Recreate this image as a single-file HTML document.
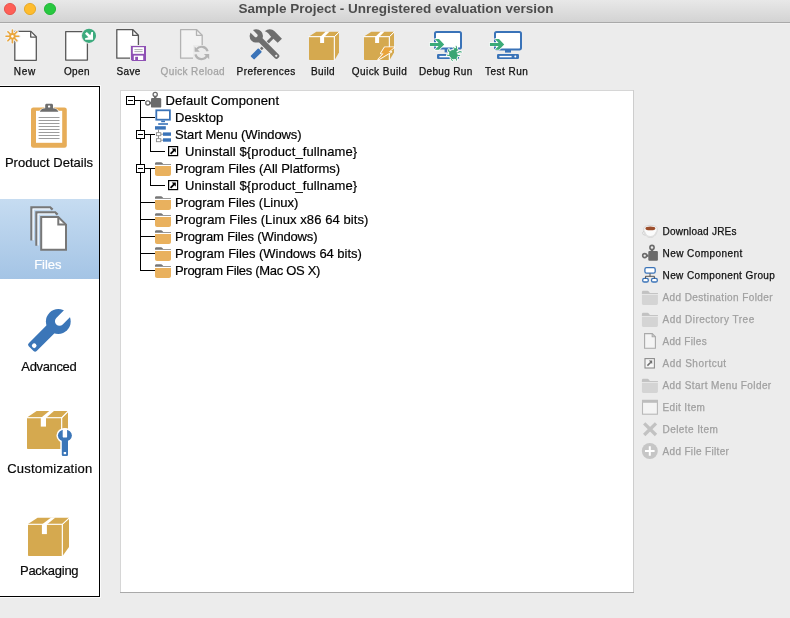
<!DOCTYPE html>
<html><head><meta charset="utf-8"><style>
html,body{margin:0;padding:0;width:790px;height:618px;overflow:hidden;background:#ececec;}
svg{position:absolute;left:0;top:0;display:block;will-change:transform;}
text{font-family:"Liberation Sans",sans-serif;}
</style></head><body>
<svg width="790" height="618" viewBox="0 0 790 618">
<defs>
<linearGradient id="tb" x1="0" y1="0" x2="0" y2="1">
<stop offset="0" stop-color="#e8e8e8"/><stop offset="1" stop-color="#d3d3d3"/>
</linearGradient>
<linearGradient id="sel" x1="0" y1="0" x2="0" y2="1">
<stop offset="0" stop-color="#c6dcf1"/><stop offset="1" stop-color="#a4c4e5"/>
</linearGradient>
</defs>
<!-- title bar -->
<rect x="0" y="0" width="790" height="22" fill="url(#tb)"/>
<rect x="0" y="22" width="790" height="1" fill="#a9a9a9"/>
<rect x="0" y="23" width="790" height="1" fill="#f1f1f1"/>
<circle cx="10" cy="9" r="5.6" fill="#fe5f57" stroke="#e2463f" stroke-width="0.8"/>
<circle cx="30" cy="9" r="5.6" fill="#febc2e" stroke="#e1a116" stroke-width="0.8"/>
<circle cx="50" cy="9" r="5.6" fill="#28c840" stroke="#14ae2a" stroke-width="0.8"/>
<text x="238.5" y="13" font-size="13.5" font-weight="bold" fill="#4d4d4d">Sample Project - Unregistered evaluation version</text>

<!-- toolbar labels -->
<g font-size="10" fill="#111" stroke="#111" stroke-width="0.25" text-anchor="middle">
<text textLength="21.6" lengthAdjust="spacing" x="24.5" y="75">New</text>
<text textLength="25.6" lengthAdjust="spacing" x="76.7" y="75">Open</text>
<text textLength="23.7" lengthAdjust="spacing" x="128.4" y="75">Save</text>
<text textLength="64.1" lengthAdjust="spacing" x="192.6" y="75" fill="#a3a3a3" stroke="#a3a3a3">Quick Reload</text>
<text textLength="58.7" lengthAdjust="spacing" x="265.9" y="75">Preferences</text>
<text textLength="23.5" lengthAdjust="spacing" x="322.8" y="75">Build</text>
<text textLength="55.1" lengthAdjust="spacing" x="379.3" y="75">Quick Build</text>
<text textLength="53.2" lengthAdjust="spacing" x="445.6" y="75">Debug Run</text>
<text textLength="43.0" lengthAdjust="spacing" x="506.4" y="75">Test Run</text>
</g>

<!-- sidebar -->
<rect x="0" y="85" width="101" height="513" fill="#fbfbfb"/>
<rect x="0" y="86" width="99" height="510" fill="#ffffff"/>
<rect x="0" y="86" width="100" height="1" fill="#000"/>
<rect x="99" y="86" width="1" height="511" fill="#000"/>
<rect x="0" y="596" width="100" height="1" fill="#000"/>
<rect x="0" y="199" width="99" height="80" fill="url(#sel)"/>
<g font-size="13" fill="#0a0a0a" stroke="#0a0a0a" stroke-width="0.2" text-anchor="middle">
<text x="49" y="167">Product Details</text>
<text textLength="27.2" lengthAdjust="spacing" x="47.8" y="269" fill="#ffffff" stroke="#ffffff">Files</text>
<text textLength="55.3" lengthAdjust="spacing" x="49" y="371">Advanced</text>
<text textLength="85" lengthAdjust="spacing" x="49.7" y="473">Customization</text>
<text textLength="58.6" lengthAdjust="spacing" x="49.3" y="575">Packaging</text>
</g>

<!-- tree panel -->
<rect x="120" y="90" width="514" height="503" fill="#d6d6d6"/>
<rect x="633" y="90" width="1" height="503" fill="#cdcdcd"/>
<rect x="120" y="592" width="514" height="1" fill="#a9a9a9"/>
<rect x="121" y="91" width="512" height="501" fill="#ffffff"/>

<g font-size="13" fill="#000" stroke="#000" stroke-width="0.2">
<text textLength="113.5" lengthAdjust="spacing" x="165.5" y="105">Default Component</text>
<text textLength="48.2" lengthAdjust="spacing" x="175" y="122">Desktop</text>
<text textLength="126.6" lengthAdjust="spacing" x="175" y="139">Start Menu (Windows)</text>
<text textLength="172.1" lengthAdjust="spacing" x="185" y="156">Uninstall ${product_fullname}</text>
<text textLength="165.1" lengthAdjust="spacing" x="175" y="173">Program Files (All Platforms)</text>
<text textLength="172.1" lengthAdjust="spacing" x="185" y="190">Uninstall ${product_fullname}</text>
<text textLength="123.3" lengthAdjust="spacing" x="175" y="207">Program Files (Linux)</text>
<text textLength="193.4" lengthAdjust="spacing" x="175" y="224">Program Files (Linux x86 64 bits)</text>
<text textLength="142.5" lengthAdjust="spacing" x="175" y="241">Program Files (Windows)</text>
<text textLength="186.8" lengthAdjust="spacing" x="175" y="258">Program Files (Windows 64 bits)</text>
<text textLength="145.4" lengthAdjust="spacing" x="175" y="275">Program Files (Mac OS X)</text>
</g>

<!-- actions -->
<g font-size="10" fill="#111" stroke="#111" stroke-width="0.25">
<text textLength="74.0" lengthAdjust="spacing" x="662.5" y="235">Download JREs</text>
<text textLength="79.7" lengthAdjust="spacing" x="662.5" y="257">New Component</text>
<text textLength="112.4" lengthAdjust="spacing" x="662.5" y="279">New Component Group</text>
<g fill="#a0a0a0" stroke="#a0a0a0">
<text textLength="110.0" lengthAdjust="spacing" x="662.5" y="301">Add Destination Folder</text>
<text textLength="91.7" lengthAdjust="spacing" x="662.5" y="323">Add Directory Tree</text>
<text textLength="44.2" lengthAdjust="spacing" x="662.5" y="345">Add Files</text>
<text textLength="63.6" lengthAdjust="spacing" x="662.5" y="367">Add Shortcut</text>
<text textLength="108.7" lengthAdjust="spacing" x="662.5" y="389">Add Start Menu Folder</text>
<text textLength="42.4" lengthAdjust="spacing" x="662.5" y="411">Edit Item</text>
<text textLength="55.4" lengthAdjust="spacing" x="662.5" y="433">Delete Item</text>
<text textLength="66.4" lengthAdjust="spacing" x="662.5" y="455">Add File Filter</text>
</g>
</g>
<!-- New -->
<g>
<path d="M14.8,31.4 H30.9 L36.3,36.8 V60.3 H14.8 Z" fill="#fff" stroke="#585858" stroke-width="1.3" stroke-linejoin="round"/>
<path d="M30.7,31.4 V37.1 H36.3" fill="none" stroke="#585858" stroke-width="1.3" stroke-linejoin="round"/>
<g stroke="#f2f2f2" stroke-width="3.6" stroke-linecap="round">
<line x1="12.4" y1="30" x2="12.4" y2="42.8"/>
<line x1="6" y1="36.3" x2="18.8" y2="36.3"/>
<line x1="7.9" y1="31.8" x2="16.9" y2="40.8"/>
<line x1="16.9" y1="31.8" x2="7.9" y2="40.8"/>
</g>
<g stroke="#eaa63c" stroke-width="1.6" stroke-linecap="round">
<line x1="12.4" y1="30" x2="12.4" y2="42.8"/>
<line x1="6" y1="36.3" x2="18.8" y2="36.3"/>
<line x1="7.9" y1="31.8" x2="16.9" y2="40.8"/>
<line x1="16.9" y1="31.8" x2="7.9" y2="40.8"/>
</g>
<circle cx="12.4" cy="36.3" r="2.3" fill="#fff" stroke="#eaa63c" stroke-width="1.9"/>
</g>
<!-- Open -->
<g>
<path d="M65.7,31.6 H82 L87.4,37 V60.1 H65.7 Z" fill="#fff" stroke="#585858" stroke-width="1.3" stroke-linejoin="round"/>
<circle cx="89" cy="35.85" r="8" fill="#ececec"/>
<circle cx="89" cy="35.85" r="7.05" fill="#3dab7e"/>
<path d="M86.82,31.88 L90.27,35.33 L91.35,32.1 L93,32.1 L93,39.8 L85.1,39.8 L85.1,38.35 L88.43,37.17 L84.98,33.72 Z" fill="#fff"/>
</g>
<!-- Save -->
<g>
<path d="M116.8,29.7 H132.9 L138.4,35.2 V58.2 H116.8 Z" fill="#fff" stroke="#585858" stroke-width="1.3" stroke-linejoin="round"/>
<path d="M132.7,29.7 V35.4 H138.4" fill="none" stroke="#585858" stroke-width="1.3" stroke-linejoin="round"/>
<path d="M130,45 H147 V62 H131.5 L130,60.5 Z" fill="#ececec"/>
<path d="M131,46 H146 V61 H132.2 L131,59.8 Z" fill="#8e50b4"/>
<rect x="132.8" y="47.2" width="11.2" height="6.6" fill="#fff"/>
<line x1="134.4" y1="49.6" x2="142.6" y2="49.6" stroke="#9a9a9a" stroke-width="0.8"/>
<line x1="134.4" y1="51.6" x2="142.6" y2="51.6" stroke="#9a9a9a" stroke-width="0.8"/>
<rect x="133.8" y="55.6" width="9.4" height="4.4" fill="#fff"/>
<rect x="135.2" y="56.8" width="2.8" height="3.2" fill="#8e50b4"/>
</g>
<!-- Quick Reload -->
<g>
<path d="M180.6,29.7 H196.7 L202.2,35.2 V58.2 H180.6 Z" fill="#f3f3f3" stroke="#b3b3b3" stroke-width="1.3" stroke-linejoin="round"/>
<path d="M196.5,29.7 V35.4 H202.2" fill="none" stroke="#b3b3b3" stroke-width="1.3" stroke-linejoin="round"/>
<rect x="193" y="45" width="18" height="16" fill="#ececec"/>
<g fill="none" stroke="#b3b3b3" stroke-width="2.2">
<path d="M196.6,49.2 A6.3,6.3 0 0 1 207.6,51.2"/>
<path d="M207.4,54.9 A6.3,6.3 0 0 1 195.4,54.4"/>
</g>
<path d="M194.6,46.6 V51.8 H199.8 Z" fill="#b3b3b3"/>
<path d="M209.2,59.2 V53.9 H203.9 Z" fill="#b3b3b3"/>
</g>
<!-- Preferences -->
<g>
<g transform="translate(256.2,53.9) rotate(-45)" fill="#6e6e6e">
<rect x="-5.6" y="-2.6" width="11.2" height="5.2" rx="0.9" fill="#3a73b8"/>
<rect x="6.6" y="-1.3" width="2.6" height="2.6"/>
<rect x="10" y="-1.5" width="13.5" height="3"/>
<path d="M23,7.4 L29,7.4 L29,-3 C29,-6.6 26.4,-9.8 22,-9.9 C22.9,-8.2 23.2,-5.6 22.7,-3 Z"/>
</g>
<g transform="translate(256.3,35.9) rotate(45)">
<path d="M0,-6.7 A6.7,6.7 0 1 1 0,6.7 A6.7,6.7 0 1 1 0,-6.7 Z M3,-2.7 L29,-2.7 C30.4,-2.7 31.2,-1.9 31.2,-0.5 L31.2,0.5 C31.2,1.9 30.4,2.7 29,2.7 L3,2.7 Z" fill="#6e6e6e" stroke="#ececec" stroke-width="1.6" paint-order="stroke" stroke-linejoin="round"/>
<path d="M-8,-1.8 L-0.6,-1.8 C0.4,-1.8 1.1,-1.1 1.1,-0.1 L1.1,0.1 C1.1,1.1 0.4,1.8 -0.6,1.8 L-8,1.8 Z" fill="#ececec"/>
<rect x="27.2" y="-1" width="2" height="2" fill="#ececec"/>
</g>
</g>
<!-- Build -->
<g>
<path d="M309,37 H334 V60 H309.8 Q309,60 309,59.2 Z" fill="#d5a94f"/>
<path d="M309,36.5 L316.3,31.8 H339 L334.5,36.5 Z" fill="#d5a94f"/>
<path d="M334.6,37 L339,32.6 V52.6 L334.6,60 Z" fill="#d5a94f"/>
<path d="M320.1,36.5 H324.1 V43 H320.1 Z" fill="#fff"/>
<path d="M320.1,37 L325.8,31.6 H329.6 L324.1,37 Z" fill="#fff"/>
<path d="M308.6,36.7 H334.3 L339.4,31.8" fill="none" stroke="#fff" stroke-width="1.0"/>
<line x1="334.3" y1="36.7" x2="334.3" y2="60.5" stroke="#fff" stroke-width="1.0"/>
</g>
<!-- Quick Build -->
<g>
<path d="M364,37 H389 V60 H364.8 Q364,60 364,59.2 Z" fill="#d5a94f"/>
<path d="M364,36.5 L371.3,31.8 H394 L389.5,36.5 Z" fill="#d5a94f"/>
<path d="M389.6,37 L394,32.6 V52.6 L389.6,60 Z" fill="#d5a94f"/>
<path d="M375.1,36.5 H379.1 V43 H375.1 Z" fill="#fff"/>
<path d="M375.1,37 L380.8,31.6 H384.6 L379.1,37 Z" fill="#fff"/>
<path d="M363.6,36.7 H389.3 L394.4,31.8" fill="none" stroke="#fff" stroke-width="1.0"/>
<line x1="389.3" y1="36.7" x2="389.3" y2="60.5" stroke="#fff" stroke-width="1.0"/>
<path d="M384.7,47.2 L394.2,47.2 L388.6,52 L391.4,51.8 L378.1,59.8 L383.6,53.4 L380.8,53.4 Z" fill="#e9a43b" stroke="#fff" stroke-width="1.6" stroke-linejoin="round" paint-order="stroke"/>
</g>
<!-- Debug Run -->
<g>
<rect x="435" y="32" width="26" height="16.6" rx="1.6" fill="#fff" stroke="#3a73b8" stroke-width="2"/>
<rect x="444.6" y="49" width="3.6" height="3.4" fill="#3a73b8"/>
<rect x="437" y="54" width="22" height="5" rx="1.2" fill="#3a73b8"/>
<rect x="439.4" y="55.9" width="12.2" height="1.4" fill="#fff"/>
<path d="M429.9,42.9 L438.6,42.9 L434.9,39 L439,39 L444.2,44.4 L439,49.8 L434.9,49.8 L438.6,45.9 L429.9,45.9 Z" fill="#3cab78" stroke="#fff" stroke-width="1.4" stroke-linejoin="round" paint-order="stroke"/>
<defs><g id="bug">
<ellipse cx="453.4" cy="54.6" rx="3.5" ry="4.3" transform="rotate(-30 453.4 54.6)"/>
<circle cx="455.6" cy="50" r="1.5"/>
<path d="M450.2,52.4 L448.4,51.2 L448.8,49.6 M457.6,52.6 L459.8,51.6 L461.4,52 M449.8,55.6 L447.2,55.2 M457.4,55.6 L459.8,55.6 M451,58.4 L452.4,60.8 M455.4,58.2 L456.4,58.6 L456.4,60.2 M454.4,49.2 L453.8,47.6 M456.8,49.2 L456.2,46.2"/>
</g></defs>
<use href="#bug" fill="#fff" stroke="#fff" stroke-width="2.6" stroke-linecap="round" stroke-linejoin="round"/>
<use href="#bug" fill="#3aa574" stroke="#3aa574" stroke-width="1" stroke-linecap="round" stroke-linejoin="round"/>
</g>
<!-- Test Run -->
<g>
<rect x="495" y="32" width="26" height="17.4" rx="1.6" fill="#fff" stroke="#3a73b8" stroke-width="2"/>
<rect x="505" y="50" width="6" height="2.6" fill="#3a73b8"/>
<rect x="497" y="54" width="22" height="5" rx="1.2" fill="#3a73b8"/>
<rect x="499.4" y="55.9" width="12.2" height="1.4" fill="#fff"/>
<circle cx="515.3" cy="56.6" r="1" fill="#fff"/>
<path d="M489.9,42.9 L498.6,42.9 L494.9,39 L499,39 L504.2,44.4 L499,49.8 L494.9,49.8 L498.6,45.9 L489.9,45.9 Z" fill="#3cab78" stroke="#fff" stroke-width="1.4" stroke-linejoin="round" paint-order="stroke"/>
</g>

<!-- Product Details clipboard -->
<g>
<rect x="31" y="107.4" width="35.8" height="40.4" rx="2.4" fill="#e7ad58"/>
<rect x="36" y="110.8" width="26.2" height="32" fill="#fff"/>
<g stroke="#929292" stroke-width="0.9">
<line x1="38.6" y1="117.5" x2="59.5" y2="117.5"/>
<line x1="38.6" y1="120.5" x2="59.5" y2="120.5"/>
<line x1="38.6" y1="123.5" x2="59.5" y2="123.5"/>
<line x1="38.6" y1="126.5" x2="59.5" y2="126.5"/>
<line x1="38.6" y1="129.5" x2="59.5" y2="129.5"/>
<line x1="38.6" y1="132.5" x2="59.5" y2="132.5"/>
<line x1="38.6" y1="135.5" x2="59.5" y2="135.5"/>
<line x1="38.6" y1="138.5" x2="59.5" y2="138.5"/>
</g>
<path d="M39.8,111.8 C40.4,109.9 42.4,108.5 45.2,108.3 V105.2 C45.2,104.4 45.9,103.8 46.7,103.8 H51.5 C52.3,103.8 53,104.4 53,105.2 V108.3 C55.8,108.5 57.8,109.9 58.4,111.8 Z" fill="#6e6e6e" stroke="#fff" stroke-width="1.3" paint-order="stroke"/>
<rect x="48" y="105.5" width="2.2" height="2.1" rx="0.6" fill="#fff"/>
</g>
<!-- Files -->
<g fill="none" stroke-linejoin="miter">
<path d="M31.4,240.6 V207.3 H50.2 L52.6,209.6" stroke="#777" stroke-width="2.2"/>
<path d="M33.1,240.2 V209 H50" stroke="#fff" stroke-width="1.1"/>
<path d="M36.4,245.8 V212.3 H55.2 L57.6,214.6" stroke="#777" stroke-width="2.2"/>
<path d="M38.1,245.4 V214 H55" stroke="#fff" stroke-width="1.1"/>
<path d="M41.2,249.7 V217.1 H58.3 L66,224.6 V249.7 Z" fill="#fff" stroke="#777" stroke-width="2"/>
<path d="M58.3,217.1 V224.4 H66" stroke="#777" stroke-width="2"/>
</g>
<!-- Advanced wrench -->
<g transform="translate(58.3,321.5) rotate(-45)">
<circle cx="0" cy="0" r="12.4" fill="#3b76b8"/>
<path d="M-6,-5.6 H-36.2 Q-38.4,-5.6 -38.4,-3.4 V3.4 Q-38.4,5.6 -36.2,5.6 H-6 Z" fill="#3b76b8"/>
<path d="M1.05,-3.9 H14 V5.2 H1.05 A4.55,4.55 0 0 1 1.05,-3.9 Z" fill="#fff"/>
<circle cx="-34.15" cy="0.07" r="2.3" fill="#fff"/>
</g>
<!-- Customization -->
<g>
<path d="M27,418 H61.4 V449 H27.8 Q27,449 27,448.2 Z" fill="#d5a94f"/>
<path d="M27,417.5 L36.6,411 H68 L61.9,417.5 Z" fill="#d5a94f"/>
<path d="M62.0,418 L68,411.8 V442 L62.0,449 Z" fill="#d5a94f"/>
<path d="M40.8,417.5 H46 V426.6 H40.8 Z" fill="#fff"/>
<path d="M40.8,418 L49.6,410.8 H54.2 L46,418 Z" fill="#fff"/>
<path d="M26.6,417.7 H61.699999999999996 L68.4,411" fill="none" stroke="#fff" stroke-width="1.1"/>
<line x1="61.699999999999996" y1="417.7" x2="61.699999999999996" y2="449.5" stroke="#fff" stroke-width="1.1"/>
<g fill="#3b76b8" stroke="#fff" stroke-width="3" stroke-linejoin="round">
<ellipse cx="64.9" cy="435.5" rx="7" ry="6"/>
<rect x="61.8" y="438" width="6.2" height="18" rx="1.3"/>
</g>
<ellipse cx="64.9" cy="435.5" rx="7" ry="6" fill="#3b76b8"/>
<rect x="61.8" y="438" width="6.2" height="18" rx="1.3" fill="#3b76b8"/>
<path d="M62.7,428.6 H67.1 V436.4 Q67.1,437.6 65.9,437.6 H63.9 Q62.7,437.6 62.7,436.4 Z" fill="#fff"/>
<rect x="63.7" y="452" width="2.4" height="2.2" fill="#fff"/>
</g>
<!-- Packaging -->
<g>
<path d="M28,524.6 H62 V556 H28.8 Q28,556 28,555.2 Z" fill="#d5a94f"/>
<path d="M28,524.1 L37.6,517.8 H69 L62.5,524.1 Z" fill="#d5a94f"/>
<path d="M62.6,524.6 L69,518.5999999999999 V547 L62.6,556 Z" fill="#d5a94f"/>
<path d="M41.9,524.1 H46.9 V534.1 H41.9 Z" fill="#fff"/>
<path d="M41.9,524.6 L51.2,517.5999999999999 H55.4 L46.9,524.6 Z" fill="#fff"/>
<path d="M27.6,524.3000000000001 H62.3 L69.4,517.8" fill="none" stroke="#fff" stroke-width="1.1"/>
<line x1="62.3" y1="524.3000000000001" x2="62.3" y2="556.5" stroke="#fff" stroke-width="1.1"/>
</g>
<g stroke="#000" stroke-width="1" fill="none" shape-rendering="crispEdges">
<rect x="126.5" y="96.5" width="8" height="8" fill="#fff"/>
<line x1="128" y1="100.5" x2="133" y2="100.5"/>
<line x1="135" y1="100.5" x2="145" y2="100.5"/>
<line x1="140.5" y1="100.5" x2="140.5" y2="130"/>
<line x1="140.5" y1="139" x2="140.5" y2="164"/>
<line x1="140.5" y1="173" x2="140.5" y2="271"/>
<line x1="140" y1="117.5" x2="155" y2="117.5"/>
<rect x="136.5" y="130.5" width="8" height="8" fill="#fff"/>
<line x1="138" y1="134.5" x2="143" y2="134.5"/>
<line x1="145" y1="134.5" x2="155" y2="134.5"/>
<line x1="150.5" y1="134.5" x2="150.5" y2="152"/>
<line x1="150" y1="151.5" x2="165" y2="151.5"/>
<rect x="136.5" y="164.5" width="8" height="8" fill="#fff"/>
<line x1="138" y1="168.5" x2="143" y2="168.5"/>
<line x1="145" y1="168.5" x2="155" y2="168.5"/>
<line x1="150.5" y1="168.5" x2="150.5" y2="186"/>
<line x1="150" y1="185.5" x2="165" y2="185.5"/>
<line x1="140" y1="202.5" x2="155" y2="202.5"/>
<line x1="140" y1="219.5" x2="155" y2="219.5"/>
<line x1="140" y1="236.5" x2="155" y2="236.5"/>
<line x1="140" y1="253.5" x2="155" y2="253.5"/>
<line x1="140" y1="270.5" x2="155" y2="270.5"/>
</g>
<!-- component icon -->
<g fill="#6b6b6b">
<rect x="151" y="98" width="10.2" height="9.6" rx="1.2"/>
<rect x="154" y="96" width="2.4" height="3"/>
<rect x="149" y="101.8" width="3" height="2.4"/>
<circle cx="155.2" cy="94.4" r="2.1" fill="#fff" stroke="#6b6b6b" stroke-width="1.3"/>
<circle cx="147.8" cy="102.9" r="2.1" fill="#fff" stroke="#6b6b6b" stroke-width="1.3"/>
</g>
<!-- desktop monitor -->
<g>
<rect x="156.3" y="110.3" width="13.6" height="9.4" fill="#fff" stroke="#3a73b8" stroke-width="1.8"/>
<rect x="161.2" y="120.6" width="3.8" height="1.6" fill="#3a73b8"/>
<rect x="158.2" y="123.2" width="9.8" height="1.6" fill="#3a73b8"/>
</g>
<!-- start menu icon -->
<g>
<rect x="155" y="126.2" width="10.8" height="3.4" fill="#3a73b8"/>
<line x1="158.5" y1="129.6" x2="158.5" y2="138.6" stroke="#8a8a8a" stroke-width="0.9"/>
<rect x="156.4" y="132.7" width="4.4" height="3" fill="#fff" stroke="#8a8a8a" stroke-width="0.9"/>
<rect x="156.4" y="138.7" width="4.4" height="3" fill="#fff" stroke="#8a8a8a" stroke-width="0.9"/>
<line x1="160.8" y1="134.2" x2="163" y2="134.2" stroke="#8a8a8a" stroke-width="0.9"/>
<line x1="160.8" y1="140.2" x2="163" y2="140.2" stroke="#8a8a8a" stroke-width="0.9"/>
<rect x="163" y="132.4" width="8" height="3.4" fill="#3a73b8"/>
<rect x="163" y="138.3" width="8" height="3.4" fill="#3a73b8"/>
</g>
<!-- shortcut icons -->
<g id="sc1">
<rect x="168.6" y="146.6" width="9" height="9" fill="#fff" stroke="#000" stroke-width="1.2"/>
<path d="M170.6,153.8 L174.2,150.2" stroke="#000" stroke-width="1.8"/>
<path d="M171.6,148.4 H175.8 V152.6 Z" fill="#000"/>
</g>
<g transform="translate(0,34)">
<rect x="168.6" y="146.6" width="9" height="9" fill="#fff" stroke="#000" stroke-width="1.2"/>
<path d="M170.6,153.8 L174.2,150.2" stroke="#000" stroke-width="1.8"/>
<path d="M171.6,148.4 H175.8 V152.6 Z" fill="#000"/>
</g>
<!-- folders -->
<g id="fold">
<path d="M155,164.6 V163.6 C155,162.8 155.6,162.2 156.4,162.2 H161 C161.6,162.2 162,162.6 162.4,163 L163.2,164 H171 V164.8 H155 Z" fill="#777"/>
<path d="M155,166 H171 V174 C171,175.1 170.1,176 169,176 H157 C155.9,176 155,175.1 155,174 Z" fill="#e9b15e"/>
</g>
<use href="#fold" y="34"/>
<use href="#fold" y="51"/>
<use href="#fold" y="68"/>
<use href="#fold" y="85"/>
<use href="#fold" y="102"/>
<!-- cup -->
<g>
<path d="M645.6,231.6 C643.2,231 642.2,232.2 642.6,233.6 C643,235 644.8,235.4 646.6,234.8" fill="none" stroke="#d0d0d0" stroke-width="1"/>
<path d="M643.8,228.6 C643.8,226.6 646.6,225.4 650.4,225.4 C654.2,225.4 657.2,226.6 657.2,228.6 C657.2,234 654.6,237.4 650.4,237.4 C646.4,237.4 643.8,234 643.8,228.6 Z" fill="#fbfbfb" stroke="#cfcfcf" stroke-width="0.9"/>
<ellipse cx="650.4" cy="228.4" rx="5" ry="1.9" fill="#9b4d2b"/>
<path d="M644.8,232 C645.6,235 647.6,236.6 650.4,236.6 C653.2,236.6 655.2,235 656.2,232" fill="none" stroke="#e0e0e0" stroke-width="1.1"/>
</g>
<!-- component -->
<g>
<rect x="648.3" y="251" width="9.6" height="9.8" rx="1.1" fill="#6b6b6b"/>
<rect x="650.8" y="249.6" width="2.4" height="2" fill="#6b6b6b"/>
<rect x="646.6" y="254.6" width="2" height="2.2" fill="#6b6b6b"/>
<circle cx="652" cy="247.5" r="2.1" fill="#ececec" stroke="#6b6b6b" stroke-width="1.6"/>
<circle cx="644.7" cy="255.6" r="2" fill="#ececec" stroke="#6b6b6b" stroke-width="1.6"/>
</g>
<!-- group -->
<g fill="#fff" stroke="#3a73b8" stroke-width="1.3">
<rect x="644.9" y="267.6" width="10.3" height="5.6" rx="1.6"/>
<rect x="642.7" y="278.4" width="5.6" height="3.6" rx="1.6"/>
<rect x="651.5" y="278.4" width="5.8" height="3.6" rx="1.6"/>
</g>
<path d="M650,273.4 V276.3 M645.5,278.4 V276.3 H654.4 V278.4" fill="none" stroke="#444" stroke-width="0.9"/>
<!-- gray folders -->
<g id="gf">
<path d="M641.9,293.6 V292.1 C641.9,291.3 642.5,290.7 643.3,290.7 H647.4 C648,290.7 648.4,291 648.8,291.4 L649.9,292.9 H657.9 V293.6 Z" fill="#c2c2c2"/>
<rect x="641.9" y="293" width="16" height="1" fill="#c4c4c4"/>
<path d="M641.9,294.7 H657.9 V303.6 C657.9,304.3 657.3,304.9 656.6,304.9 H643.2 C642.5,304.9 641.9,304.3 641.9,303.6 Z" fill="#d4d4d4"/>
</g>
<use href="#gf" y="22"/>
<use href="#gf" y="88"/>
<!-- file -->
<path d="M644.6,333.6 H652.2 L655.4,336.8 V348.2 H644.6 Z" fill="#f4f4f4" stroke="#a9a9a9" stroke-width="1.1"/>
<path d="M652.2,333.6 V336.8 H655.4" fill="none" stroke="#a9a9a9" stroke-width="1.1"/>
<!-- shortcut -->
<rect x="645" y="358.6" width="9.4" height="9.4" fill="#f6f6f6" stroke="#8c8c8c" stroke-width="1.1"/>
<path d="M647.4,365.6 L650.8,362.2" stroke="#6e6e6e" stroke-width="1.5"/>
<path d="M648.8,360.6 H652.2 V364 Z" fill="#6e6e6e"/>
<!-- edit item -->
<rect x="642.5" y="400.5" width="14.9" height="13.7" fill="#f4f4f4" stroke="#b8b8b8" stroke-width="1.1"/>
<rect x="642" y="399.8" width="15.9" height="3" fill="#bdbdbd"/>
<!-- delete X -->
<path d="M644.2,423.4 L656,435 M656,423.4 L644.2,435" stroke="#c2c2c2" stroke-width="3.3"/>
<!-- plus circle -->
<circle cx="649.8" cy="451" r="8" fill="#c6c6c6"/>
<path d="M649.8,446.2 V455.8 M645,451 H654.6" stroke="#fff" stroke-width="2"/>

<!--ICONS3-->
</svg>
</body></html>
